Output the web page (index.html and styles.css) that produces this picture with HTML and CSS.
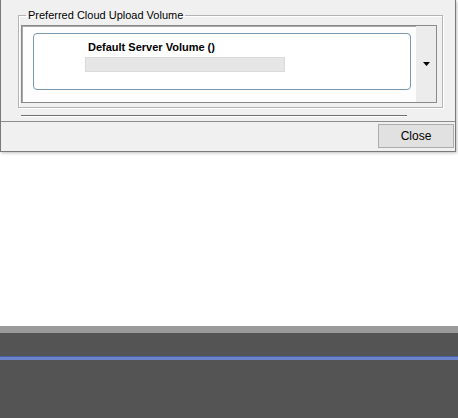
FILE: index.html
```html
<!DOCTYPE html>
<html lang="en">
  <head>
    <meta charset="UTF-8" />
    <meta name="viewport" content="width=device-width, initial-scale=1.0" />
    <title>Cloud Upload Settings</title>
    <link rel="stylesheet" href="styles.css">
  </head>
  <body>
    <div class="dialog">
      <div class="dialog-body">
        <fieldset class="group">
          <legend>Preferred Cloud Upload Volume</legend>
          <div class="volume-picker">
            <div class="volume-list">
              <div class="volume-card">
                <div class="volume-name">Default Server Volume ()</div>
                <div class="usage-bar"></div>
              </div>
            </div>
            <div class="drop-button">
              <svg width="7" height="4" viewBox="0 0 7 4"><path d="M0 0h7L3.5 4z" fill="#000"/></svg>
            </div>
          </div>
        </fieldset>
        <div class="separator"></div>
      </div>
      <div class="dialog-footer">
        <button class="btn">Close</button>
      </div>
    </div>

    <div class="desktop"></div>
    <div class="taskbar">
      <div class="taskbar-edge"></div>
      <div class="taskbar-strip"></div>
    </div>
  </body>
</html>
```

FILE: styles.css
```css
html,
body {
  margin: 0;
  height: 100%;
  background: #fff;
  font-family: "Liberation Sans", Arial, sans-serif;
  font-size: 11px;
  color: #000;
  overflow: hidden;
}

.dialog {
  width: 454px;
  background: #f0f0f0;
  border-left: 1px solid #7a7a7a;
  border-right: 1px solid #7a7a7a;
  border-bottom: 1px solid #7a7a7a;
  box-shadow: 1px 1px 3px rgba(0, 0, 0, 0.25);
}

.dialog-body {
  padding: 8px 12px 0 17px;
  height: 121px;
  box-sizing: border-box;
}

/* etched group box */
.group {
  margin: 0;
  padding: 3px 5px 4px 2px;
  border: 1px solid #b4b4b4;
  box-shadow: inset 1px 1px 0 #fff, 1px 1px 0 #fff;
}

.group legend {
  padding: 0 2px;
  margin-left: 5px;
  line-height: 14px;
  color: #000;
}

.volume-picker {
  display: flex;
  height: 78px;
  border: 1px solid #8a8a8a;
  box-shadow: inset 1px 1px 0 #a8a8a8;
  background: #fdfdfd;
  box-sizing: border-box;
}

.volume-list {
  flex: 1;
  padding: 7px 5px 0 11px;
}

.volume-card {
  height: 57px;
  box-sizing: border-box;
  border: 1px solid #7b98b2;
  border-radius: 4px;
  background: #fff;
  padding: 6px 0 0 51px;
}

.volume-name {
  font-weight: bold;
  margin-left: 3px;
  line-height: 14px;
}

.usage-bar {
  width: 198px;
  height: 13px;
  margin-top: 3px;
  background: #e6e6e6;
  border: 1px solid #dadada;
}

.drop-button {
  width: 20px;
  background: #ececec;
  display: flex;
  align-items: center;
  justify-content: center;
}

.separator {
  margin: 7px 36px 0 3px;
  border-top: 1px solid #6e6e6e;
  border-bottom: 1px solid #fff;
}

.dialog-footer {
  height: 30px;
  border-top: 1px solid #8c8c8c;
  display: flex;
  justify-content: flex-end;
  align-items: flex-start;
  padding: 2px 1px 0 0;
  box-sizing: border-box;
}

.btn {
  width: 76px;
  height: 24px;
  font-family: "Liberation Sans", Arial, sans-serif;
  font-size: 12px;
  background: #e1e1e1;
  border: 1px solid #adadad;
  color: #000;
  padding: 0;
}

.desktop {
  height: 174px;
}

.taskbar {
  background: #545454;
  height: 100px;
}

.taskbar-edge {
  height: 7px;
  background: #9a9a9a;
}

.taskbar-strip {
  margin-top: 23px;
  height: 3px;
  background: #6c84cb;
  border-top: 1px solid #4a5f9c;
}
```
